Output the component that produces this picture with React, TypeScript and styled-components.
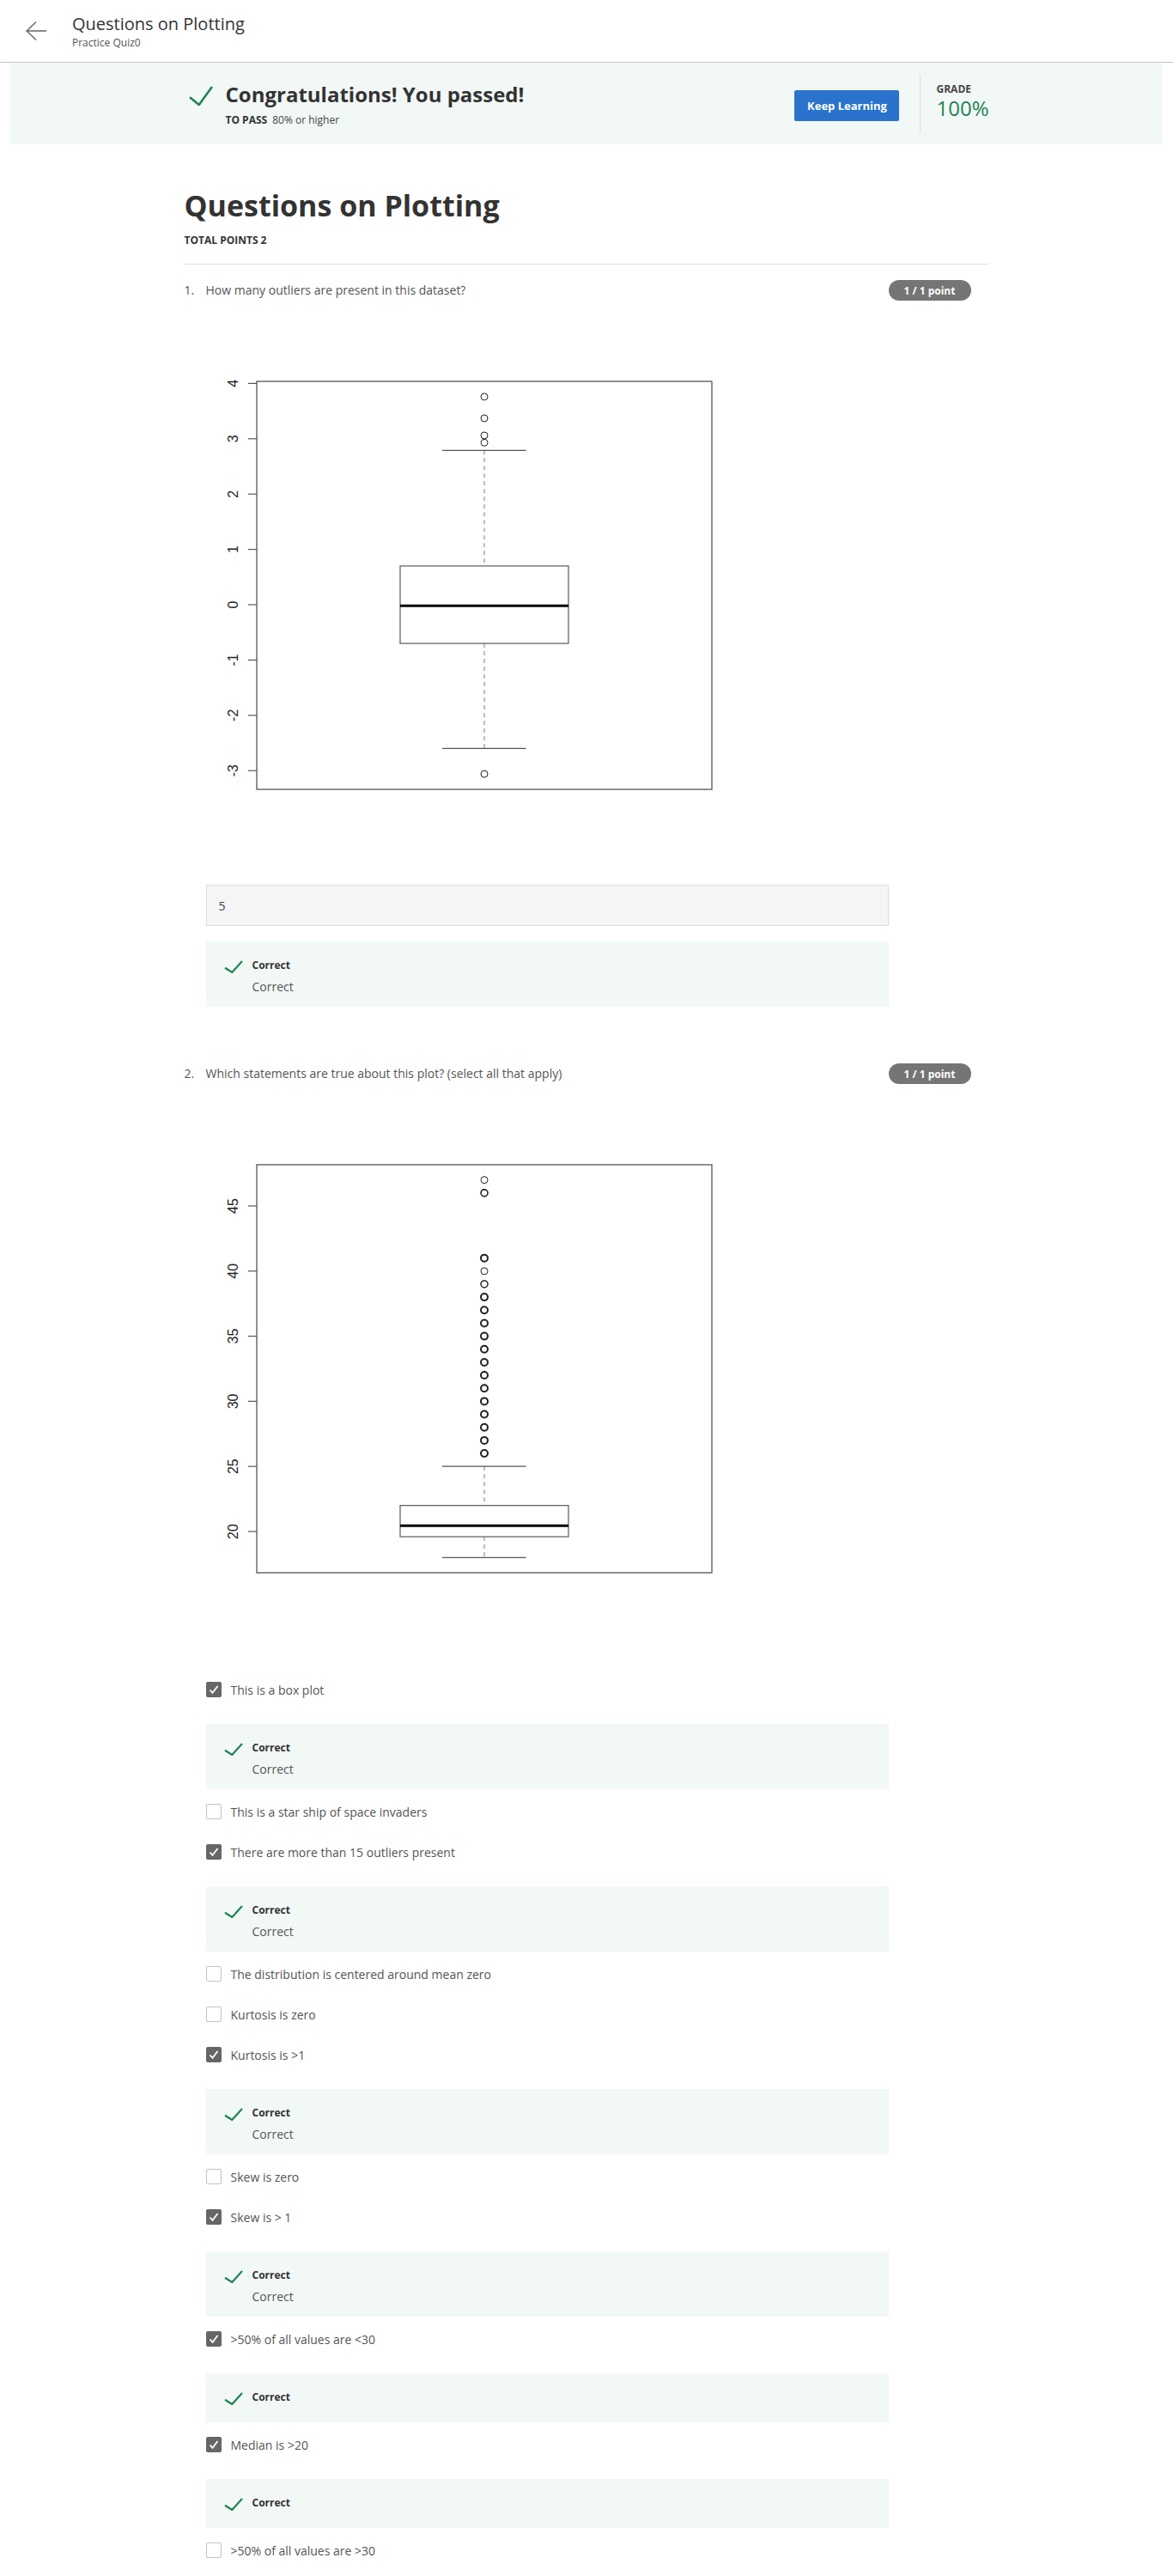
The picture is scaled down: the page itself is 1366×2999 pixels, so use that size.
import React from "react";
import styled, { createGlobalStyle } from "styled-components";

const GlobalStyle = createGlobalStyle`
  html, body { margin: 0; padding: 0; background: #ffffff; }
  body { font-family: "Open Sans", "Noto Sans", sans-serif; color: #333333; }
  * { box-sizing: border-box; }
`;

/* ---------- Top bar ---------- */
const TopBar = styled.header`
  height: 73px;
  border-bottom: 1px solid #c4c4c4;
  display: flex;
  align-items: center;
  padding-left: 30px;
  gap: 30px;
`;
const BackButton = styled.button`
  border: 0;
  background: none;
  padding: 0;
  display: flex;
  width: 24px;
  height: 22px;
  cursor: pointer;
`;
const TitleBlock = styled.div`
  display: flex;
  flex-direction: column;
`;
const TopTitle = styled.div`
  font-size: 20px;
  line-height: 26px;
  color: #333;
`;
const TopSub = styled.div`
  font-size: 12px;
  line-height: 15px;
  color: #555;
  margin-top: 1px;
`;

/* ---------- Banner ---------- */
const Banner = styled.section`
  margin: 0 12px;
  height: 95px;
  background: #f2f8f5;
  display: flex;
  align-items: center;
`;
const BannerInner = styled.div`
  width: 937px;
  margin: 0 auto;
  padding-left: 5px;
  display: flex;
  align-items: center;
`;
const PassGroup = styled.div`
  display: flex;
  align-items: flex-start;
  gap: 15px;
`;
const PassIcon = styled.svg`
  margin-top: 6px;
  flex: none;
`;
const PassText = styled.div`
  display: flex;
  flex-direction: column;
`;
const PassTitle = styled.div`
  font-size: 24px;
  line-height: 32px;
  font-weight: 700;
  color: #333;
`;
const PassSub = styled.div`
  margin-top: 6px;
  font-size: 12px;
  line-height: 16px;
  color: #444;
  strong { font-weight: 700; margin-right: 6px; color: #333; }
`;
const KeepButton = styled.button`
  margin-left: auto;
  margin-top: 5px;
  height: 36px;
  width: 122px;
  border: 0;
  border-radius: 2px;
  background: #2a73cc;
  color: #fff;
  font-family: "Open Sans", sans-serif;
  font-weight: 700;
  font-size: 13px;
  cursor: pointer;
`;
const VDivider = styled.div`
  width: 1px;
  height: 68px;
  background: #dcdcdc;
  margin: 0 18px 0 24px;
`;
const GradeBlock = styled.div`
  display: flex;
  flex-direction: column;
  padding-bottom: 6px;
`;
const GradeLabel = styled.div`
  font-size: 12px;
  line-height: 16px;
  font-weight: 700;
  color: #444;
  text-transform: uppercase;
`;
const GradeValue = styled.div`
  font-size: 24px;
  line-height: 28px;
  color: #1f8354;
`;

/* ---------- Main ---------- */
const Main = styled.main`
  width: 937px;
  margin: 0 auto;
  padding-bottom: 60px;
`;
const PageTitle = styled.h1`
  margin: 51px 0 0;
  font-size: 34px;
  line-height: 40px;
  font-weight: 700;
  color: #333;
`;
const TotalPoints = styled.div`
  margin-top: 13px;
  font-size: 12px;
  line-height: 16px;
  font-weight: 700;
  color: #333;
  text-transform: uppercase;
`;
const Rule = styled.hr`
  margin: 19px 0 0;
  border: 0;
  border-top: 1px solid #e1e1e1;
`;
const Question = styled.section<{ $first?: boolean }>`
  margin-top: ${(p) => (p.$first ? "18px" : "66px")};
`;
const QuestionHead = styled.div`
  display: flex;
  align-items: center;
  height: 24px;
`;
const QNum = styled.span`
  width: 25px;
  flex: none;
  font-size: 14px;
  line-height: 20px;
  color: #555;
`;
const QText = styled.span`
  font-size: 14px;
  line-height: 20px;
  color: #555;
`;
const PointBadge = styled.span`
  margin-left: auto;
  margin-right: 21px;
  height: 24px;
  width: 96px;
  border-radius: 12px;
  background: #757575;
  color: #fff;
  font-size: 12px;
  font-weight: 700;
  display: flex;
  align-items: center;
  justify-content: center;
`;
const AnswerArea = styled.div`
  padding-left: 25px;
  width: 820px;
`;
const PlotSvg = styled.svg`
  display: block;
  margin-top: 35px;
`;
const TextAnswer = styled.div`
  margin-top: 38px;
  height: 48px;
  border: 1px solid #dedede;
  background: #f5f5f5;
  padding-left: 14px;
  display: flex;
  align-items: center;
  font-size: 14px;
  color: #444;
`;
const Feedback = styled.div<{ $gap: number }>`
  margin-top: ${(p) => p.$gap}px;
  background: #f2f8f5;
  padding: 16px 20px 15px 21px;
  display: flex;
  align-items: flex-start;
  gap: 11px;
`;
const FeedbackIcon = styled.svg`
  margin-top: 4px;
  flex: none;
`;
const FeedbackBody = styled.div`
  display: flex;
  flex-direction: column;
`;
const FeedbackTitle = styled.div`
  font-size: 12px;
  line-height: 24px;
  font-weight: 700;
  color: #333;
`;
const FeedbackText = styled.div`
  margin-top: 5px;
  font-size: 14px;
  line-height: 16px;
  color: #555;
`;
const OptionList = styled.div`
  margin-top: 37px;
`;
const OptionRow = styled.label`
  display: flex;
  align-items: center;
  gap: 11px;
  padding: 14px 0 9px;
  height: 47px;
  font-size: 14px;
  color: #555;
`;
const Box = styled.span<{ $checked: boolean }>`
  width: 18px;
  height: 18px;
  flex: none;
  border-radius: 2px;
  display: flex;
  align-items: center;
  justify-content: center;
  background: ${(p) => (p.$checked ? "#666666" : "#ffffff")};
  border: ${(p) => (p.$checked ? "none" : "1.5px solid #c2c2c2")};
`;

/* ---------- Icons ---------- */
const BackArrow = () => (
  <svg width="24" height="22" viewBox="0 0 24 22" fill="none">
    <path d="M24 11H1M12 0.5L1 11l11 10.5" stroke="#666" strokeWidth="1.4" />
  </svg>
);

const GreenCheck = ({ w, h }: { w: number; h: number }) => (
  <svg width={w} height={h} viewBox={`0 0 ${w} ${h}`} fill="none">
    <path
      d={`M1 ${h * 0.58} L${w * 0.42} ${h - 1} L${w - 1} 1`}
      stroke="#1f8354"
      strokeWidth={w > 24 ? 2.6 : 2.2}
      strokeLinejoin="miter"
    />
  </svg>
);

const Check = () => (
  <Box $checked>
    <svg width="14" height="14" viewBox="0 0 14 14" fill="none">
      <path d="M2.5 7.5 L5.5 10.8 L11.5 3" stroke="#fff" strokeWidth="1.8" />
    </svg>
  </Box>
);

/* ---------- Box plot drawing ---------- */
type PlotProps = {
  ticks: { v: number; label: string }[];
  y: (v: number) => number;
  q1: number;
  q3: number;
  med: number;
  lo: number;
  hi: number;
  outliers: { v: number; w: number }[];
};

function BoxPlot(p: PlotProps) {
  const cx = 324;
  const yq1 = p.y(p.q1);
  const yq3 = p.y(p.q3);
  const yhi = p.y(p.hi);
  const ylo = p.y(p.lo);
  return (
    <PlotSvg width={619} height={607} viewBox="0 0 619 607">
      <rect x={0} y={0} width={619} height={607} fill="#fff" />
      {p.ticks.map((t) => {
        const ty = p.y(t.v);
        return (
          <g key={t.label}>
            <line x1={49} x2={59} y1={ty} y2={ty} stroke="#555" strokeWidth={1.2} />
            <text
              x={37}
              y={ty}
              transform={`rotate(-90 37 ${ty})`}
              textAnchor="middle"
              fontSize={16}
              fontFamily='"Liberation Sans", Arial, sans-serif'
              fill="#222"
            >
              {t.label}
            </text>
          </g>
        );
      })}
      <line x1={cx} x2={cx} y1={yhi} y2={yq3} stroke="#999" strokeWidth={1.3} strokeDasharray="5 4" />
      <line x1={cx} x2={cx} y1={yq1} y2={ylo} stroke="#999" strokeWidth={1.3} strokeDasharray="5 4" />
      <line x1={275} x2={372.5} y1={yhi} y2={yhi} stroke="#555" strokeWidth={1.2} />
      <line x1={275} x2={372.5} y1={ylo} y2={ylo} stroke="#555" strokeWidth={1.2} />
      <rect x={226} y={yq3} width={196} height={yq1 - yq3} fill="#fff" stroke="#666" strokeWidth={1.3} />
      <line x1={226} x2={422} y1={p.y(p.med)} y2={p.y(p.med)} stroke="#000" strokeWidth={3} />
      {p.outliers.map((o, i) => (
        <circle key={i} cx={cx} cy={p.y(o.v)} r={4} fill="none" stroke="#222" strokeWidth={o.w} />
      ))}
      <rect x={59} y={59} width={530} height={475} fill="none" stroke="#555" strokeWidth={1.3} />
    </PlotSvg>
  );
}

const plot1: PlotProps = {
  ticks: [-3, -2, -1, 0, 1, 2, 3, 4].map((v) => ({ v, label: String(v) })),
  y: (v) => 319 - 64.4 * v,
  q1: -0.7,
  q3: 0.7,
  med: -0.02,
  lo: -2.6,
  hi: 2.79,
  outliers: [
    { v: 3.76, w: 1 },
    { v: 3.37, w: 1 },
    { v: 3.06, w: 1 },
    { v: 2.93, w: 1 },
    { v: -3.06, w: 1 },
  ],
};

const heavy = [26, 27, 28, 29, 30, 31, 32, 33, 34, 35, 36, 37, 38, 41];
const plot2: PlotProps = {
  ticks: [20, 25, 30, 35, 40, 45].map((v) => ({ v, label: String(v) })),
  y: (v) => 486 - 15.16 * (v - 20),
  q1: 19.6,
  q3: 22,
  med: 20.45,
  lo: 18,
  hi: 25,
  outliers: [
    ...heavy.map((v) => ({ v, w: 2 })),
    { v: 39, w: 1.5 },
    { v: 40, w: 1 },
    { v: 46, w: 1.6 },
    { v: 47, w: 1 },
  ],
};

/* ---------- Data ---------- */
type Opt = { text: string; checked: boolean; feedback?: boolean; note?: boolean };
const options: Opt[] = [
  { text: "This is a box plot", checked: true, feedback: true, note: true },
  { text: "This is a star ship of space invaders", checked: false },
  { text: "There are more than 15 outliers present", checked: true, feedback: true, note: true },
  { text: "The distribution is centered around mean zero", checked: false },
  { text: "Kurtosis is zero", checked: false },
  { text: "Kurtosis is >1", checked: true, feedback: true, note: true },
  { text: "Skew is zero", checked: false },
  { text: "Skew is > 1", checked: true, feedback: true, note: true },
  { text: ">50% of all values are <30", checked: true, feedback: true },
  { text: "Median is >20", checked: true, feedback: true },
  { text: ">50% of all values are >30", checked: false },
];

function CorrectNote({ gap, note }: { gap: number; note?: boolean }) {
  return (
    <Feedback $gap={gap}>
      <FeedbackIcon as="div">
        <GreenCheck w={22} h={15} />
      </FeedbackIcon>
      <FeedbackBody>
        <FeedbackTitle>Correct</FeedbackTitle>
        {note && <FeedbackText>Correct</FeedbackText>}
      </FeedbackBody>
    </Feedback>
  );
}

export default function App() {
  return (
    <>
      <GlobalStyle />
      <TopBar>
        <BackButton aria-label="Back">
          <BackArrow />
        </BackButton>
        <TitleBlock>
          <TopTitle>Questions on Plotting</TopTitle>
          <TopSub>Practice Quiz0</TopSub>
        </TitleBlock>
      </TopBar>

      <Banner>
        <BannerInner>
          <PassGroup>
            <PassIcon as="div">
              <GreenCheck w={28} h={23} />
            </PassIcon>
            <PassText>
              <PassTitle>Congratulations! You passed!</PassTitle>
              <PassSub>
                <strong>TO PASS</strong>80% or higher
              </PassSub>
            </PassText>
          </PassGroup>
          <KeepButton>Keep Learning</KeepButton>
          <VDivider />
          <GradeBlock>
            <GradeLabel>Grade</GradeLabel>
            <GradeValue>100%</GradeValue>
          </GradeBlock>
        </BannerInner>
      </Banner>

      <Main>
        <PageTitle>Questions on Plotting</PageTitle>
        <TotalPoints>Total points 2</TotalPoints>
        <Rule />

        <Question $first>
          <QuestionHead>
            <QNum>1.</QNum>
            <QText>How many outliers are present in this dataset?</QText>
            <PointBadge>1 / 1 point</PointBadge>
          </QuestionHead>
          <AnswerArea>
            <BoxPlot {...plot1} />
            <TextAnswer>5</TextAnswer>
            <CorrectNote gap={18} note />
          </AnswerArea>
        </Question>

        <Question>
          <QuestionHead>
            <QNum>2.</QNum>
            <QText>Which statements are true about this plot? (select all that apply)</QText>
            <PointBadge>1 / 1 point</PointBadge>
          </QuestionHead>
          <AnswerArea>
            <BoxPlot {...plot2} />
            <OptionList>
              {options.map((o) => (
                <React.Fragment key={o.text}>
                  <OptionRow>
                    {o.checked ? <Check /> : <Box $checked={false} />}
                    <span>{o.text}</span>
                  </OptionRow>
                  {o.feedback && <CorrectNote gap={19} note={o.note} />}
                </React.Fragment>
              ))}
            </OptionList>
          </AnswerArea>
        </Question>
      </Main>
    </>
  );
}
